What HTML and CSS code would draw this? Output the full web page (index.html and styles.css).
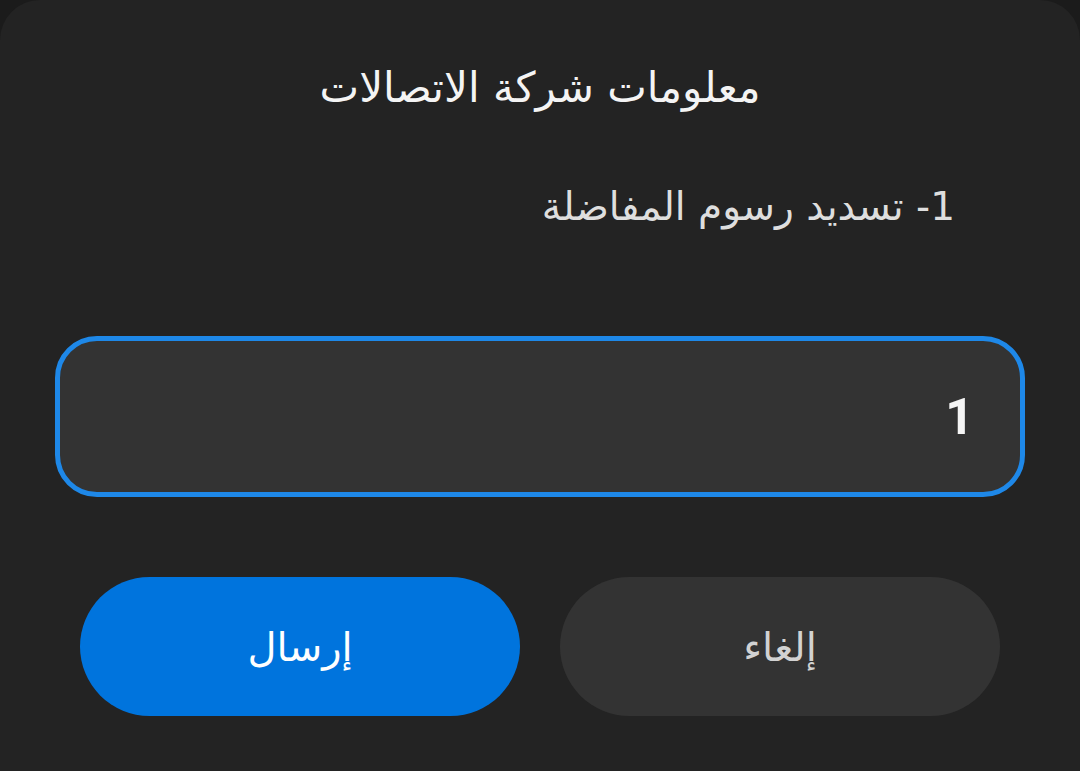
FILE: index.html
```html
<!DOCTYPE html>
<html lang="ar" dir="rtl">
<head>
<meta charset="utf-8">
<link rel="stylesheet" href="styles.css">
</head>
<body>
<div class="dialog">
  <div class="title">معلومات شركة الاتصالات</div>
  <div class="message">1- تسديد رسوم المفاضلة</div>
  <div class="field"><span class="value">1</span></div>
  <div class="actions">
    <div class="btn btn-cancel">إلغاء</div>
    <div class="btn btn-send">إرسال</div>
  </div>
</div>
</body>
</html>
```

FILE: styles.css
```css
html, body {
  margin: 0;
  padding: 0;
  width: 1080px;
  height: 771px;
  background: #1b1b1b;
  overflow: hidden;
}
.dialog {
  box-sizing: border-box;
  width: 1080px;
  height: 771px;
  background: #232323;
  border-radius: 40px 40px 0 0;
  display: flex;
  flex-direction: column;
  font-family: "DejaVu Sans", "Noto Sans", sans-serif;
  color: #f2f2f2;
}
.title {
  margin-top: 64px;
  height: 48px;
  line-height: 48px;
  text-align: center;
  font-size: 42px;
  color: #f4f4f4;
}
.message {
  margin-top: 71px;
  height: 48px;
  line-height: 48px;
  padding-right: 125px;
  font-size: 39px;
  color: #dedede;
}
.field {
  box-sizing: border-box;
  margin: 105px 55px 0;
  height: 161px;
  border: 5px solid #1e88e8;
  border-radius: 42px;
  background: #333333;
  display: flex;
  align-items: center;
  padding-right: 46px;
}
.value {
  font-family: "Roboto", "DejaVu Sans", sans-serif;
  font-size: 50px;
  font-weight: 700;
  color: #f5f5f5;
}
.actions {
  margin: 80px 80px 0;
  display: flex;
  gap: 40px;
}
.btn {
  flex: 1;
  height: 139px;
  border-radius: 70px;
  display: flex;
  align-items: center;
  justify-content: center;
  font-size: 40px;
}
.btn-cancel {
  background: #333333;
  color: #d2d2d2;
}
.btn-send {
  background: #0074dd;
  color: #ffffff;
}
```
